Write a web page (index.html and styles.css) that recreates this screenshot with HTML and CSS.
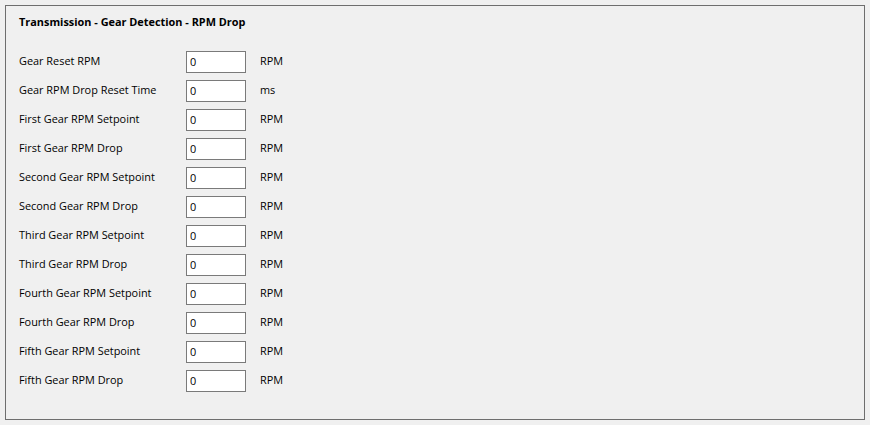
FILE: index.html
```html
<!DOCTYPE html>
<html>
<head>
<meta charset="utf-8">
<link rel="stylesheet" href="styles.css">
</head>
<body>
<div class="panel">
  <div class="title">Transmission - Gear Detection - RPM Drop</div>
  <div class="form">
    <div class="label">Gear Reset RPM</div><input class="field" value="0"><div class="unit">RPM</div>
    <div class="label">Gear RPM Drop Reset Time</div><input class="field" value="0"><div class="unit">ms</div>
    <div class="label">First Gear RPM Setpoint</div><input class="field" value="0"><div class="unit">RPM</div>
    <div class="label">First Gear RPM Drop</div><input class="field" value="0"><div class="unit">RPM</div>
    <div class="label">Second Gear RPM Setpoint</div><input class="field" value="0"><div class="unit">RPM</div>
    <div class="label">Second Gear RPM Drop</div><input class="field" value="0"><div class="unit">RPM</div>
    <div class="label">Third Gear RPM Setpoint</div><input class="field" value="0"><div class="unit">RPM</div>
    <div class="label">Third Gear RPM Drop</div><input class="field" value="0"><div class="unit">RPM</div>
    <div class="label">Fourth Gear RPM Setpoint</div><input class="field" value="0"><div class="unit">RPM</div>
    <div class="label">Fourth Gear RPM Drop</div><input class="field" value="0"><div class="unit">RPM</div>
    <div class="label">Fifth Gear RPM Setpoint</div><input class="field" value="0"><div class="unit">RPM</div>
    <div class="label">Fifth Gear RPM Drop</div><input class="field" value="0"><div class="unit">RPM</div>
  </div>
</div>
</body>
</html>
```
FILE: styles.css
```css
html, body {
  margin: 0;
  background: #f0f0f0;
}
body {
  padding: 5px 5px 6px 5px;
  font-family: "Open Sans", "Noto Sans", sans-serif;
  font-size: 10.9px;
  color: #000;
}
.panel {
  border: 1px solid #6e6e6e;
  height: 415px;
  box-sizing: border-box;
  padding: 8px 13px 0 13px;
}
.title {
  font-weight: bold;
  line-height: 16px;
  height: 16px;
}
.form {
  margin-top: 21px;
  display: grid;
  grid-template-columns: 167px 60px auto;
  grid-auto-rows: 22px;
  row-gap: 7px;
  align-items: center;
}
.label, .unit {
  line-height: 16px;
  padding-bottom: 3px;
}
.field {
  box-sizing: border-box;
  width: 60px;
  height: 22px;
  margin: 0;
  border: 1px solid #7a7a7a;
  background: #fff;
  padding: 0 0 1px 3px;
  font-family: inherit;
  font-size: 10.9px;
  color: #000;
  outline: none;
}
.unit {
  padding-left: 14px;
}
```
